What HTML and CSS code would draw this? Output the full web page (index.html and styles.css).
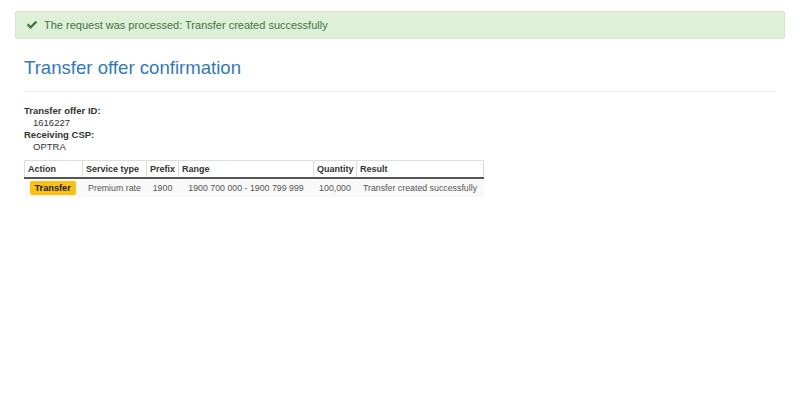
FILE: index.html
```html
<!DOCTYPE html>
<html>
<head>
<meta charset="utf-8">
<link rel="stylesheet" href="styles.css">
</head>
<body>
<div class="page">
  <div class="alert">
    <svg class="check" width="12" height="10" viewBox="0 0 12 10"><path d="M0.8 5.2 L2.4 3.6 L4.6 5.8 L9.6 0.8 L11.2 2.4 L4.6 9 Z" fill="#3c763d"/></svg>
    <span>The request was processed: Transfer created successfully</span>
  </div>
  <div class="content">
    <h1 class="title">Transfer offer confirmation</h1>
    <dl class="details">
      <dt>Transfer offer ID:</dt>
      <dd>1616227</dd>
      <dt>Receiving CSP:</dt>
      <dd>OPTRA</dd>
    </dl>
    <table class="grid">
      <colgroup>
        <col class="w-action">
        <col class="w-service">
        <col class="w-prefix">
        <col class="w-range">
        <col class="w-qty">
        <col class="w-result">
      </colgroup>
      <thead>
        <tr>
          <th>Action</th>
          <th>Service type</th>
          <th>Prefix</th>
          <th>Range</th>
          <th>Quantity</th>
          <th>Result</th>
        </tr>
      </thead>
      <tbody>
        <tr>
          <td class="first"><span class="badge">Transfer</span></td>
          <td class="c">Premium rate</td>
          <td class="c">1900</td>
          <td class="c">1900 700 000 - 1900 799 999</td>
          <td class="c">100,000</td>
          <td class="c">Transfer created successfully</td>
        </tr>
      </tbody>
    </table>
  </div>
</div>
</body>
</html>
```
FILE: styles.css
```css
html, body {
  margin: 0;
  padding: 0;
  background: #fff;
}
body {
  font-family: "Liberation Sans", Arial, sans-serif;
  color: #333;
}
.page {
  padding: 11px 15px 0 15px;
}
.alert {
  display: flex;
  align-items: center;
  gap: 6px;
  height: 26px;
  padding: 0 0 0 10px;
  background: #dff0d8;
  border: 1px solid #d6e9c6;
  border-radius: 2px;
  color: #3c763d;
  font-size: 11px;
}
.check {
  flex: none;
}
.content {
  padding: 0 9px;
}
.title {
  margin: 0;
  padding: 17px 0 11px 0;
  font-size: 18.6px;
  font-weight: normal;
  color: #337ab7;
  border-bottom: 1px solid #eee;
  line-height: 24px;
}
.details {
  margin: 13px 0 0 0;
  font-size: 9.5px;
  line-height: 12px;
}
.details dt {
  font-weight: bold;
}
.details dd {
  margin: 0 0 0 9px;
}
.grid {
  margin-top: 7px;
  border-collapse: collapse;
  table-layout: fixed;
  width: 459px;
}
.w-action { width: 58px; }
.w-service { width: 64px; }
.w-prefix { width: 32px; }
.w-range { width: 135px; }
.w-qty { width: 43px; }
.w-result { width: 127px; }
.grid th {
  text-align: left;
  font-weight: bold;
  font-size: 9px;
  padding: 3px 3px;
  border: 1px solid #ddd;
  border-bottom: 2px solid #555;
  height: 10px;
  white-space: nowrap;
}
.grid td {
  background: #f9f9f9;
  padding: 2px 0;
  height: 13px;
  white-space: nowrap;
  font-size: 8.8px;
}
.grid td.first {
  padding-left: 5px;
}
.grid td.c {
  text-align: center;
  color: #555;
}
.badge {
  display: inline-block;
  background: #fcc010;
  color: #222;
  font-weight: bold;
  padding: 1px 5px;
  border-radius: 2px;
  font-size: 9.2px;
  line-height: 12px;
}
```
